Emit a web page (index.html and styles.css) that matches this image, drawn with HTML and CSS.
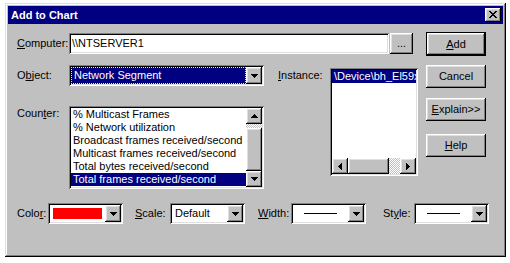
FILE: index.html
```html
<!DOCTYPE html>
<html>
<head>
<meta charset="utf-8">
<link rel="stylesheet" href="styles.css">
</head>
<body>
<div class="window">
  <div class="titlebar">
    <span class="title">Add to Chart</span>
    <div class="close btn3d"><svg width="8" height="7" viewBox="0 0 8 7" shape-rendering="crispEdges"><path d="M0 0h2v1H0zM6 0h2v1H6zM1 1h2v1H1zM5 1h2v1H5zM2 2h4v1H2zM3 3h2v1H3zM2 4h4v1H2zM1 5h2v1H1zM5 5h2v1H5zM0 6h2v1H0zM6 6h2v1H6z"/></svg></div>
  </div>
  <div class="content">
    <div class="main">
      <div class="row">
        <span class="lbl w52"><u>C</u>omputer:</span>
        <div class="field edit-computer">\\NTSERVER1</div>
        <div class="btn3d browse">...</div>
      </div>
      <div class="split">
        <div class="leftcol">
          <div class="row">
            <span class="lbl w52">O<u>b</u>ject:</span>
            <div class="field combo combo-object">
              <div class="combo-value"><span class="focus-sel">Network Segment</span></div>
              <div class="btn3d arrowbtn"><svg width="7" height="4" viewBox="0 0 7 4" shape-rendering="crispEdges"><path d="M0 0h7v1H0zM1 1h5v1H1zM2 2h3v1H2zM3 3h1v1H3z"/></svg></div>
            </div>
          </div>
          <div class="row counter-row">
            <span class="lbl w52 counter-lbl">Coun<u>t</u>er:</span>
            <div class="field counter-list">
              <ul class="items">
                <li class="item">% Multicast Frames</li>
                <li class="item">% Network utilization</li>
                <li class="item">Broadcast frames received/second</li>
                <li class="item">Multicast frames received/second</li>
                <li class="item">Total bytes received/second</li>
                <li class="item sel">Total frames received/second</li>
              </ul>
              <div class="vscroll">
                <div class="btn3d sb-btn"><svg width="7" height="4" viewBox="0 0 7 4" shape-rendering="crispEdges"><path d="M3 0h1v1H3zM2 1h3v1H2zM1 2h5v1H1zM0 3h7v1H0z"/></svg></div>
                <div class="dither vdither"></div>
                <div class="btn3d vthumb"></div>
                <div class="btn3d sb-btn"><svg width="7" height="4" viewBox="0 0 7 4" shape-rendering="crispEdges"><path d="M0 0h7v1H0zM1 1h5v1H1zM2 2h3v1H2zM3 3h1v1H3z"/></svg></div>
              </div>
            </div>
          </div>
        </div>
        <div class="instance">
          <span class="lbl w52 instance-lbl"><u>I</u>nstance:</span>
          <div class="field instance-list">
            <div class="inst-items"><div class="item sel inst-sel">\Device\bh_El59x1</div></div>
            <div class="hscroll">
              <div class="btn3d sb-btn"><svg width="4" height="7" viewBox="0 0 4 7" shape-rendering="crispEdges"><path d="M3 0h1v7H3zM2 1h1v5H2zM1 2h1v3H1zM0 3h1v1H0z"/></svg></div>
              <div class="btn3d hthumb"></div>
              <div class="dither hdither"></div>
              <div class="btn3d sb-btn"><svg width="4" height="7" viewBox="0 0 4 7" shape-rendering="crispEdges"><path d="M0 0h1v7H0zM1 1h1v5H1zM2 2h1v3H2zM3 3h1v1H3z"/></svg></div>
            </div>
          </div>
        </div>
      </div>
    </div>
    <div class="buttons">
      <div class="btn3d pushbtn default"><span><u>A</u>dd</span></div>
      <div class="btn3d pushbtn cancel">Cancel</div>
      <div class="btn3d pushbtn explain"><span><u>E</u>xplain&gt;&gt;</span></div>
      <div class="btn3d pushbtn help"><span><u>H</u>elp</span></div>
    </div>
  </div>
  <div class="bottom-row">
    <span class="lbl lbl-color">Colo<u>r</u>:</span>
    <div class="field combo small-combo">
      <div class="combo-value"><div class="swatch"></div></div>
      <div class="btn3d arrowbtn"><svg width="7" height="4" viewBox="0 0 7 4" shape-rendering="crispEdges"><path d="M0 0h7v1H0zM1 1h5v1H1zM2 2h3v1H2zM3 3h1v1H3z"/></svg></div>
    </div>
    <span class="lbl lbl-scale"><u>S</u>cale:</span>
    <div class="field combo small-combo">
      <div class="combo-value"><span class="combo-text">Default</span></div>
      <div class="btn3d arrowbtn"><svg width="7" height="4" viewBox="0 0 7 4" shape-rendering="crispEdges"><path d="M0 0h7v1H0zM1 1h5v1H1zM2 2h3v1H2zM3 3h1v1H3z"/></svg></div>
    </div>
    <span class="lbl lbl-width"><u>W</u>idth:</span>
    <div class="field combo small-combo">
      <div class="combo-value"><div class="line-sample"></div></div>
      <div class="btn3d arrowbtn"><svg width="7" height="4" viewBox="0 0 7 4" shape-rendering="crispEdges"><path d="M0 0h7v1H0zM1 1h5v1H1zM2 2h3v1H2zM3 3h1v1H3z"/></svg></div>
    </div>
    <span class="lbl lbl-style">St<u>y</u>le:</span>
    <div class="field combo small-combo">
      <div class="combo-value"><div class="line-sample"></div></div>
      <div class="btn3d arrowbtn"><svg width="7" height="4" viewBox="0 0 7 4" shape-rendering="crispEdges"><path d="M0 0h7v1H0zM1 1h5v1H1zM2 2h3v1H2zM3 3h1v1H3z"/></svg></div>
    </div>
  </div>
</div>
</body>
</html>
```
FILE: styles.css
```css
* { box-sizing: border-box; }
body {
  margin: 0;
  background: #fff;
  font-family: "Liberation Sans", Arial, sans-serif;
  font-size: 11px;
  color: #000;
}
svg { display: block; }
.window {
  margin: 3px 0 0 5px;
  width: 501px;
  height: 254px;
  background: #c0c0c0;
  padding: 3px;
  box-shadow: inset -1px -1px #000, inset 1px 1px #dfdfdf, inset -2px -2px #808080, inset 2px 2px #fff;
  display: flex;
  flex-direction: column;
}
.titlebar {
  height: 18px;
  flex: none;
  background: #000080;
  color: #fff;
  display: flex;
  align-items: center;
  padding-left: 3px;
  padding-right: 2px;
}
.title { font-weight: bold; font-size: 11px; line-height: 13px; }
.btn3d {
  background: #c0c0c0;
  box-shadow: inset -1px -1px #000, inset 1px 1px #fff, inset -2px -2px #808080, inset 2px 2px #dfdfdf;
}
.close {
  margin-left: auto;
  width: 16px;
  height: 14px;
  padding: 3px 0 0 4px;
}
.content { display: flex; padding: 9px 0 0 9px; }
.main { width: 401px; display: flex; flex-direction: column; }
.row { display: flex; align-items: center; height: 21px; }
.lbl { white-space: nowrap; line-height: 13px; flex: none; }
.w52 { width: 52px; }
.field {
  background: #fff;
  box-shadow: inset 1px 1px #808080, inset -1px -1px #fff, inset 2px 2px #000, inset -2px -2px #dfdfdf;
  padding: 2px;
  flex: none;
}
.edit-computer { width: 320px; height: 21px; padding: 2px 3px; line-height: 17px; }
.browse {
  width: 23px; height: 21px; margin-left: 1px;
  display: flex; align-items: center; justify-content: center;
  line-height: 13px; padding-bottom: 1px;
}
.split { display: flex; margin-top: 11px; }
.leftcol { width: 247px; display: flex; flex-direction: column; }
.combo { display: flex; height: 21px; }
.combo-object { width: 195px; }
.combo-value { flex: 1; display: flex; align-items: center; min-width: 0; }
.focus-sel {
  flex: 1; align-self: stretch;
  background: #000080; color: #fff;
  outline: 1px dotted #ff0; outline-offset: -1px;
  padding-left: 3px; line-height: 17px; white-space: nowrap;
}
.arrowbtn {
  width: 16px; height: 17px; flex: none;
  display: flex; align-items: center; justify-content: center;
}
.counter-row { height: auto; align-items: flex-start; margin-top: 20px; }
.counter-lbl { margin-top: 1px; }
.counter-list { width: 195px; height: 83px; display: flex; }
.items { flex: 1; list-style: none; margin: 0; padding: 0; min-width: 0; }
.item { height: 13px; line-height: 13px; padding-left: 2px; white-space: nowrap; }
.sel { background: #000080; color: #fff; }
.vscroll { width: 16px; display: flex; flex-direction: column; }
.sb-btn {
  width: 16px; height: 16px; flex: none;
  display: flex; align-items: center; justify-content: center;
}
.dither { background: repeating-conic-gradient(#fff 0 25%, #c0c0c0 0 50%) 0 0 / 2px 2px; }
.vdither { height: 4px; }
.vthumb { height: 43px; }
.instance { display: flex; margin-left: 14px; align-items: flex-start; }
.instance-lbl { margin-top: 4px; }
.instance-list { width: 88px; height: 108px; margin-top: 3px; display: flex; flex-direction: column; }
.inst-items { flex: 1; overflow: hidden; }
.inst-sel { width: max-content; padding-right: 4px; }
.hscroll { height: 16px; display: flex; flex: none; }
.hthumb { width: 41px; }
.hdither { width: 11px; }
.buttons { margin-left: 8px; display: flex; flex-direction: column; }
.pushbtn {
  width: 60px; height: 23px;
  display: flex; align-items: center; justify-content: center;
  line-height: 13px;
}
.default { border: 1px solid #000; height: 24px; margin-top: -1px; }
.cancel { margin-top: 9px; }
.explain { margin-top: 10px; }
.help { margin-top: 13px; }
.bottom-row { display: flex; align-items: center; height: 21px; margin-top: 14px; padding-left: 9px; flex: none; }
.small-combo { width: 75px; }
.lbl-color { width: 31px; }
.lbl-scale { width: 35px; margin-left: 12px; }
.lbl-width { width: 33px; margin-left: 13px; }
.lbl-style { width: 31px; margin-left: 17px; }
.swatch { margin: 3px; flex: 1; align-self: stretch; background: #f00; }
.combo-text { padding-left: 3px; line-height: 17px; }
.line-sample { width: 33px; height: 1px; background: #000; margin-left: 11px; }
```
